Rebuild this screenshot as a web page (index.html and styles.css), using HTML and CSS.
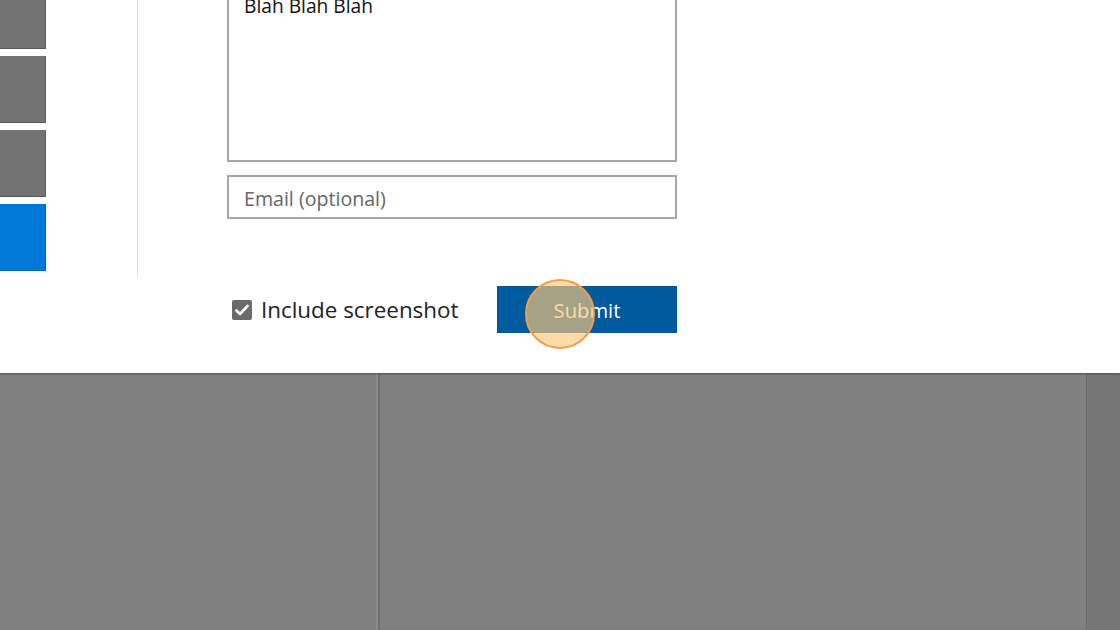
FILE: index.html
```html
<!DOCTYPE html>
<html>
<head>
<meta charset="utf-8">
<link rel="stylesheet" href="styles.css">
</head>
<body>
<div class="panel">
  <div class="tiles">
    <div class="tile"></div>
    <div class="tile"></div>
    <div class="tile"></div>
    <div class="tile active"></div>
  </div>
  <div class="divider"></div>
  <div class="form">
    <div class="textarea">Blah Blah Blah</div>
    <div class="email">Email (optional)</div>
    <div class="actions">
      <label class="check">
        <span class="box"><svg width="14" height="12" viewBox="0 0 14 12"><path d="M1.5 6.5 L5 10 L12.5 2" fill="none" stroke="#fff" stroke-width="2.6" stroke-linecap="round" stroke-linejoin="round"/></svg></span>
        <span class="label">Include screenshot</span>
      </label>
      <div class="submit-wrap">
        <button class="submit">Submit</button>
        <span class="click"></span>
      </div>
    </div>
  </div>
</div>
<div class="backdrop">
  <div class="bg-left"></div>
  <div class="bg-mid"></div>
  <div class="bg-right"></div>
</div>
</body>
</html>
```
FILE: styles.css
```css
html, body {
  margin: 0;
  padding: 0;
  width: 1120px;
  height: 630px;
  overflow: hidden;
  background: #808080;
  font-family: "Open Sans", "Noto Sans", sans-serif;
}
.panel {
  position: relative;
  z-index: 2;
  height: 373px;
  background: #fff;
  display: flex;
  align-items: flex-start;
  box-shadow: 0 1px 2px rgba(0,0,0,0.35);
  overflow: hidden;
}
.tiles {
  width: 46px;
  display: flex;
  flex-direction: column;
  gap: 7px;
  margin-top: -18px;
}
.tile {
  height: 66px;
  background: #737373;
  border-right: 1px solid #5e5e5e;
  border-bottom: 1px solid #5a5a5a;
}
.tile.active {
  background: #0078d7;
  border-color: #0067b8;
}
.divider {
  width: 1px;
  height: 276px;
  margin-left: 91px;
  background: #dcdcdc;
}
.form {
  margin-left: 89px;
  width: 450px;
  display: flex;
  flex-direction: column;
}
.textarea {
  margin-top: -40px;
  height: 202px;
  box-sizing: border-box;
  border: 2px solid #a6a6a6;
  padding: 32px 0 0 15px;
  font-size: 19.2px;
  line-height: 24px;
  color: #111;
}
.email {
  margin-top: 13px;
  height: 44px;
  box-sizing: border-box;
  border: 2px solid #a6a6a6;
  padding: 0 15px;
  font-size: 19.6px;
  line-height: 44px;
  color: #666;
}
.actions {
  margin-top: 67px;
  display: flex;
  align-items: center;
  justify-content: space-between;
}
.check {
  display: flex;
  align-items: center;
  margin-left: 5px;
}
.box {
  width: 20px;
  height: 20px;
  border-radius: 2px;
  background: #6b6b6b;
  display: flex;
  align-items: center;
  justify-content: center;
}
.label {
  margin-left: 9px;
  font-size: 22.4px;
  color: #222;
}
.submit-wrap {
  position: relative;
}
.submit {
  display: block;
  width: 180px;
  height: 47px;
  border: none;
  background: #005a9e;
  color: #fff;
  font-family: "Open Sans", "Noto Sans", sans-serif;
  font-size: 20.2px;
  padding: 0;
}
.click {
  position: absolute;
  left: 28px;
  top: -7px;
  width: 66px;
  height: 66px;
  border-radius: 50%;
  border: 2px solid #f0a050;
  background: rgba(251, 200, 120, 0.66);
}
.backdrop {
  height: 257px;
  display: flex;
}
.bg-left {
  width: 376px;
  background: #808080;
}
.bg-mid {
  width: 708px;
  background: #808080;
  border-left: 2px solid #8a8a8a;
  box-shadow: inset 2px 0 2px rgba(0,0,0,0.12);
}
.bg-right {
  flex: 1;
  background: #777;
  border-left: 1px solid #6c6c6c;
}
```
